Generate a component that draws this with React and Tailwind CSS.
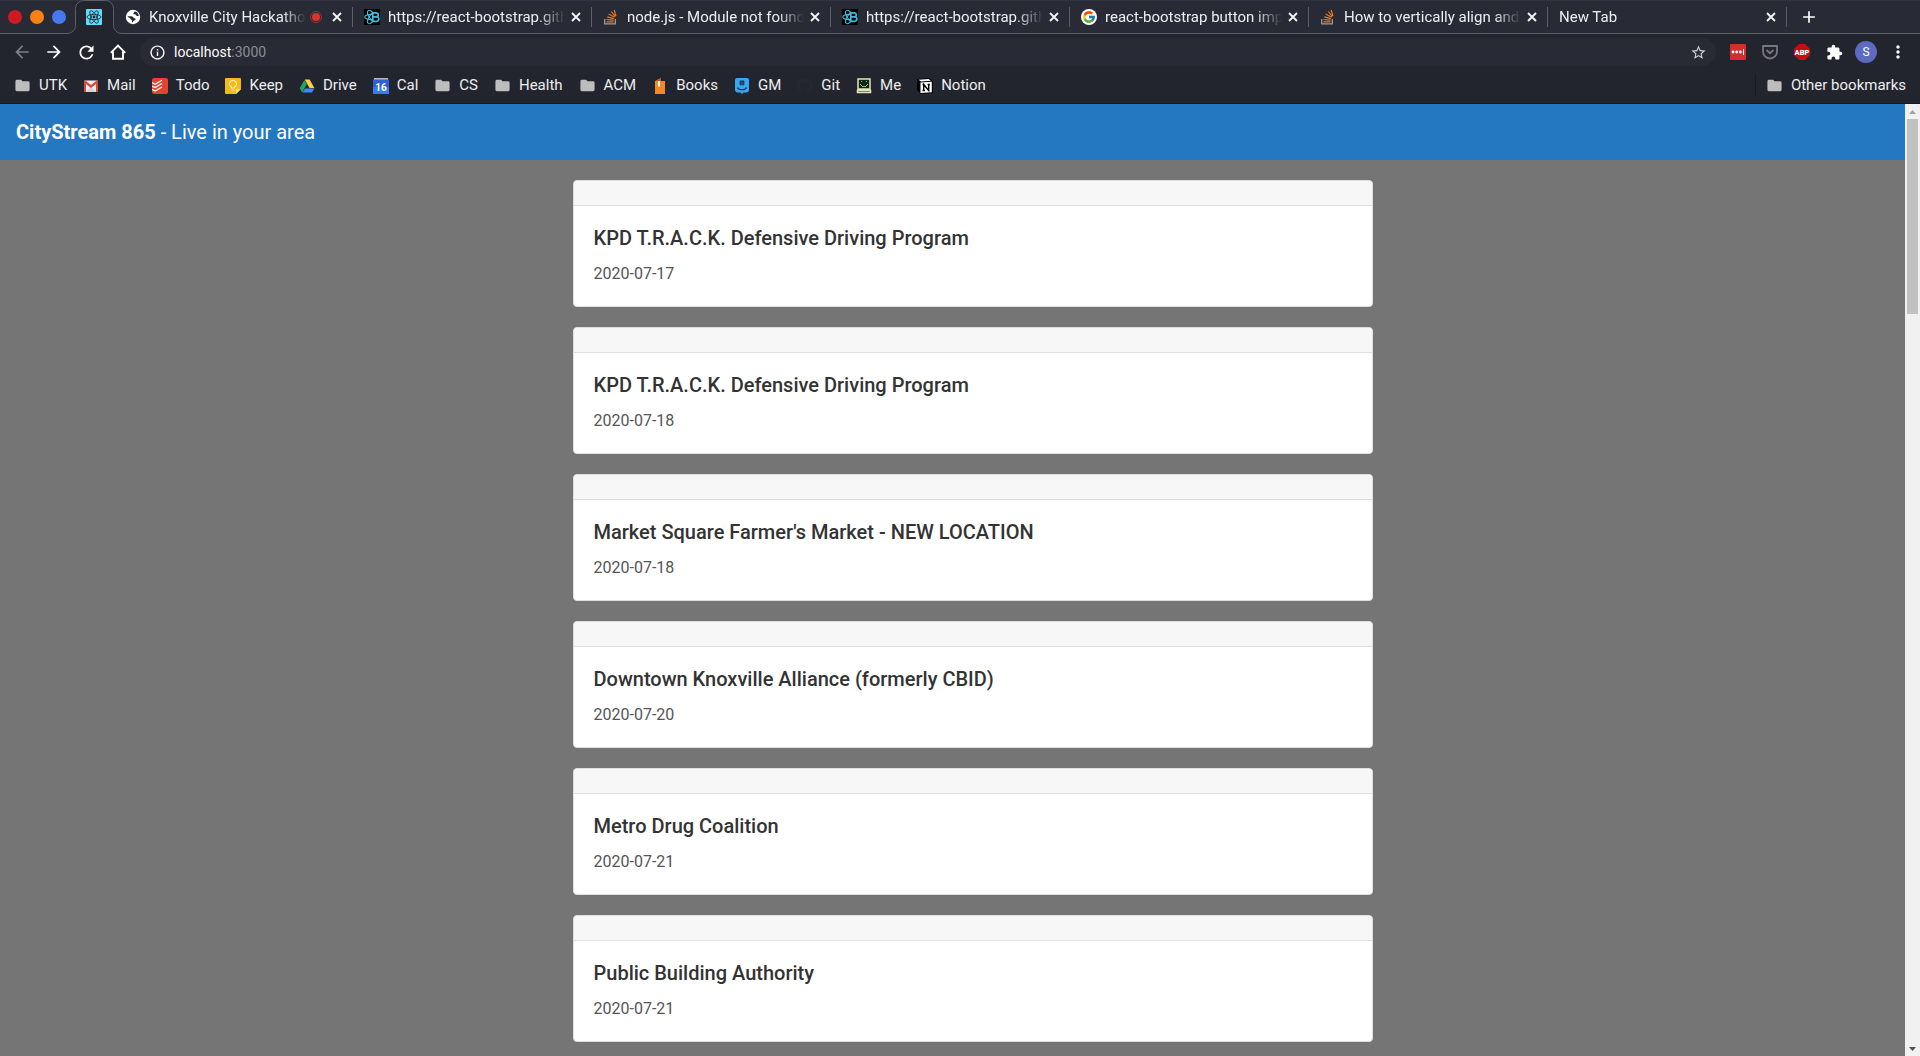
import React from "react";
import { FcGoogle } from "react-icons/fc";
import { FaGithub } from "react-icons/fa";
import {
  MdAdd, MdArrowBack, MdArrowForward, MdExtension, MdFolder,
  MdInfoOutline, MdMoreVert, MdRefresh, MdStarBorder,
} from "react-icons/md";

function ReactIcon() {
  return (
    <svg viewBox="0 0 16 16" className="size-4">
      <rect width="16" height="16" rx="1" fill="#61dafb" />
      <g fill="none" stroke="#20232a" strokeWidth="0.8">
        <ellipse cx="8" cy="8" rx="7" ry="2.7" />
        <ellipse cx="8" cy="8" rx="7" ry="2.7" transform="rotate(60 8 8)" />
        <ellipse cx="8" cy="8" rx="7" ry="2.7" transform="rotate(120 8 8)" />
      </g>
      <circle cx="8" cy="8" r="1.400" fill="#20232a" />
    </svg>
  );
}

function ReactBootstrapIcon() {
  return (
    <svg viewBox="0 0 16 16" className="size-4">
      <rect width="16" height="16" fill="#000" />
      <g fill="none" stroke="#41b9d6" strokeWidth="1.200">
        <path d="M8 5.300C3.500 5.200.8 6.500.8 8s2.700 2.800 7.200 2.700" />
        <path d="M8.500 3.400C7.200 1.400 5.200.8 4.200 1.600 2.900 2.800 4 6.300 5.600 8.800c1 1.600 1.900 2.900 2.900 3.800" />
        <path d="M8.500 12.600c-1.300 2-3.300 2.600-4.300 1.800C2.900 13.200 4 9.700 5.600 7.200c1-1.600 1.900-2.900 2.900-3.800" />
      </g>
      <path d="M8.800 3.800h3.400a2 2 0 0 1 0 4.100H8.800zm0 4.100h3.800a2.200 2.200 0 0 1 0 4.400H8.800z" fill="#000" stroke="#41b9d6" strokeWidth="1.700" />
    </svg>
  );
}

function StackOverflowIcon() {
  return (
    <svg viewBox="0 0 16 16" className="size-4">
      <path d="M1.700 10v4.900h10.600V10" fill="none" stroke="#9a9c9e" strokeWidth="1.300" />
      <g stroke="#e87722" strokeWidth="1.200">
        <path d="M3.500 12.900h7M3.600 10.500l6.900.7M4.200 7.800l6.600 1.900M5.700 5l5.800 3.300M8.300 2.500l4.100 5.200M11.200 1l1.700 6" />
      </g>
    </svg>
  );
}

function GlobeIcon() {
  return (
    <svg viewBox="0 0 16 16" className="size-4">
      <circle cx="8" cy="8" r="7.200" fill="#fff" />
      <path d="M9.300 2.700c.2.900-.9 1-.9 1.800 0 .7.900.9 1.600.8.900 0 .9 1.500 2 1.600.7.100 1.300-.1 1.700.3.200-1.700-.6-3.200-1.900-4-.8-.5-1.700-.7-2.500-.5z" fill="#282a35" />
      <path d="M2.400 7.400c1.400-.3 3.700-.3 5 .2 1.100.4.900 1.600 2.100 1.700 1.100.1 1.300.8.900 1.500-.6 1-1.900.7-2.300 1.700-.2.500-.5.900-1 1-.4-.8.300-1.500-.1-2.200-.3-.6-1.200-.6-1.500-1.300-.2-.7-.6-1.100-1.300-1.300-.6-.1-1.200-.6-1.800-1.300z" fill="#282a35" />
    </svg>
  );
}

function RecordingIcon() {
  return (
    <svg viewBox="0 0 12 12" className="size-3 shrink-0">
      <circle cx="6" cy="6" r="5.500" fill="none" stroke="#c5302d" strokeWidth="0.800" />
      <circle cx="6" cy="6" r="4" fill="#dc322e" />
    </svg>
  );
}

function CloseIcon() {
  return (
    <svg viewBox="0 0 14 14" className="size-[14px]" fill="none" stroke="#f4f4f5" strokeWidth="1.900">
      <path d="M3 3l8 8M11 3l-8 8" />
    </svg>
  );
}

function GmailIcon() {
  return (
    <svg viewBox="0 0 16 16" className="size-4">
      <rect x="1" y="2.500" width="14" height="11.500" rx="1" fill="#eceaea" />
      <path d="M3 14l5-5 5 5z" fill="#d5d3d3" />
      <path d="M1 14V3.500a1 1 0 0 1 1.500-.8L8 7l5.500-4.300a1 1 0 0 1 1.500.8V14h-2V6L8 10 3 6v8z" fill="#d54b3d" />
    </svg>
  );
}

function TodoistIcon() {
  return (
    <svg viewBox="0 0 16 16" className="size-4">
      <rect width="16" height="16" rx="2" fill="#e44332" />
      <path d="M0 4.600l3 1.600 7-4M0 8l3 1.600 7-4M0 11.400L3 13l7-4" fill="none" stroke="#fff" strokeWidth="1.200" />
    </svg>
  );
}

function KeepIcon() {
  return (
    <svg viewBox="0 0 16 16" className="size-4">
      <path d="M0 1a1 1 0 0 1 1-1h14a1 1 0 0 1 1 1v10l-5 5H1a1 1 0 0 1-1-1z" fill="#f5ba15" />
      <path d="M11 16v-4a1 1 0 0 1 1-1h4z" fill="#fbdf7f" />
      <path d="M6.500 10V9a3.500 3.500 0 1 1 3 0v1zM6.500 12.300h3" fill="none" stroke="#fdeebc" strokeWidth="1.100" />
    </svg>
  );
}

function DriveIcon() {
  return (
    <svg viewBox="0 0 16 16" className="size-4">
      <path d="M5.700 1.500h4.900L15.400 10h-4.900z" fill="#ffcf48" />
      <path d="M5.300 2.100L.7 10.200l2.400 4.200 4.700-8.200z" fill="#20a464" />
      <path d="M5.900 10.400h9.400L13 14.500H3.500z" fill="#4285f4" />
    </svg>
  );
}

function CalendarIcon() {
  return (
    <svg viewBox="0 0 16 16" className="size-4">
      <path d="M1 0h14v2H1z" fill="#b9bbc0" />
      <rect y="1.500" width="16" height="14.500" fill="#3060d4" />
      <rect y="9" width="16" height="7" fill="#4285f4" opacity=".7" />
      <text x="8" y="13" textAnchor="middle" fill="#fff" fontSize="10" fontWeight="700" fontFamily="Roboto, sans-serif">16</text>
    </svg>
  );
}

function FolderIcon() {
  return <MdFolder className="size-[17px] text-[#bdbdbd]" />;
}

function BooksIcon() {
  return (
    <svg viewBox="0 0 16 16" className="size-4">
      <path d="M3 3l6-3v3h4v13H3z" fill="#f08a24" />
      <path d="M4 2.500L9 .3V3H4z" fill="#c4521f" />
      <path d="M6 3h2v6l-1-1-1 1z" fill="#fff" />
    </svg>
  );
}

function GroupMeIcon() {
  return (
    <svg viewBox="0 0 16 16" className="size-4">
      <path d="M3 0h10a2 2 0 0 1 2 2v9.500a3 3 0 0 1-3 3H9.500L8 16l-1.500-1.500H4a3 3 0 0 1-3-3V2a2 2 0 0 1 2-2z" fill="#38a6f0" />
      <path d="M6.900 2.300v5.200M9.100 2.300v5.200M5.400 3.800h5.200M5.400 6h5.200M3.500 9.500c1.500 3 7.500 3 9 0" fill="none" stroke="#17324b" strokeWidth="1.200" />
    </svg>
  );
}

function GitHubIcon() {
  return <FaGithub className="size-4 text-[#24292e]" />;
}

function ComputerIcon() {
  return (
    <svg viewBox="0 0 16 16" className="size-4">
      <path d="M2 1h12v10H2zM1.500 12.500h13v2h-13z" fill="#17231a" stroke="#e4e5bd" strokeWidth="1.500" />
      <path d="M5 3h1v1H5zM10 3h1v1h-1zM4 6h1v1H4zM5 7h1v1H5zM6 8h4v1H6zM10 7h1v1h-1zM11 6h1v1h-1z" fill="#5ff04f" />
    </svg>
  );
}

function NotionIcon() {
  return (
    <svg viewBox="0 0 16 16" className="size-4">
      <path d="M0 1l12-1 4 3v12l-12 1-4-4z" fill="#000" />
      <path d="M1.500 1.700L11.500 1 14 2.700 4 3.400z" fill="#fff" />
      <path d="M3.500 4.400L14.800 3.700v10.600L3.500 15z" fill="#fff" />
      <path d="M6.700 12.500v-6l5 6v-6M5.500 6.500h2M5.500 12.500h2.400M10.500 6.500h2.400" fill="none" stroke="#000" strokeWidth="1.400" />
    </svg>
  );
}

function HomeIcon() {
  return (
    <svg viewBox="0 0 16 16" className="size-4" fill="none" stroke="#fff" strokeWidth="1.900">
      <path d="M.8 8.800L8 1.500l7.200 7.300M3 7.500v7.200h10V7.500" />
    </svg>
  );
}

const tabs = [
  { title: "Knoxville City Hackatho", icon: <GlobeIcon />, recording: true },
  { title: "https://react-bootstrap.gith", icon: <ReactBootstrapIcon /> },
  { title: "node.js - Module not found", icon: <StackOverflowIcon /> },
  { title: "https://react-bootstrap.gith", icon: <ReactBootstrapIcon /> },
  {
    title: "react-bootstrap button imp",
    icon: <span className="flex size-4 items-center justify-center rounded-full bg-white"><FcGoogle className="size-[14px]" /></span>,
  },
  { title: "How to vertically align and", icon: <StackOverflowIcon /> },
  { title: "New Tab" },
];

const bookmarks = [
  ["UTK", FolderIcon], ["Mail", GmailIcon], ["Todo", TodoistIcon], ["Keep", KeepIcon],
  ["Drive", DriveIcon], ["Cal", CalendarIcon], ["CS", FolderIcon], ["Health", FolderIcon],
  ["ACM", FolderIcon], ["Books", BooksIcon], ["GM", GroupMeIcon], ["Git", GitHubIcon],
  ["Me", ComputerIcon], ["Notion", NotionIcon],
];

const events = [
  ["KPD T.R.A.C.K. Defensive Driving Program", "2020-07-17"],
  ["KPD T.R.A.C.K. Defensive Driving Program", "2020-07-18"],
  ["Market Square Farmer's Market - NEW LOCATION", "2020-07-18"],
  ["Downtown Knoxville Alliance (formerly CBID)", "2020-07-20"],
  ["Metro Drug Coalition", "2020-07-21"],
  ["Public Building Authority", "2020-07-21"],
];

function Tab({ title, icon, recording }) {
  return (
    <div className="flex h-[33px] min-w-0 max-w-[239px] flex-1 items-center pl-[11px]">
      <button className="flex min-w-0 flex-1 items-center gap-2 text-left">
        {icon && <span className="flex size-4 shrink-0 items-center justify-center">{icon}</span>}
        <span className="min-w-0 flex-1 overflow-hidden whitespace-nowrap mask-r-from-85%">{title}</span>
      </button>
      {recording && <span className="mx-1"><RecordingIcon /></span>}
      <button aria-label={"Close " + title} className="mr-2 ml-1 shrink-0">
        <CloseIcon />
      </button>
      <span className="h-5 w-px shrink-0 bg-[#5c5e66]" />
    </div>
  );
}

function TabStrip() {
  return (
    <div className="flex h-[34px] items-stretch border-t border-b border-t-[#30323d] border-b-[#5c5e66] bg-[#282a35]">
      <div className="flex w-[76px] shrink-0 items-center gap-2 pl-2">
        <button aria-label="Close window" className="size-[14px] rounded-full bg-[#cc1b22]" />
        <button aria-label="Minimize window" className="size-[14px] rounded-full bg-[#fa8116]" />
        <button aria-label="Maximize window" className="size-[14px] rounded-full bg-[#4679f0]" />
      </div>
      <button aria-label="React App" className="relative flex w-9 shrink-0 items-center justify-center">
        <svg viewBox="0 0 55 34" className="absolute -top-px -left-[9px] h-[34px] w-[55px] max-w-none" fill="#23252e">
          <path d="M0 34v-.5a8 8 0 0 0 8.500-8V8.500a8 8 0 0 1 8-8h22a8 8 0 0 1 8 8v17a8 8 0 0 0 8.500 8v.5z" />
          <path d="M0 33.500a8 8 0 0 0 8.500-8V8.500a8 8 0 0 1 8-8h22a8 8 0 0 1 8 8v17a8 8 0 0 0 8.500 8" fill="none" stroke="#5c5e66" />
        </svg>
        <span className="relative"><ReactIcon /></span>
      </button>
      <div className="flex min-w-0 flex-1 items-center pl-[2px]">
        {tabs.map((tab, i) => <Tab key={i} {...tab} />)}
        <button aria-label="New tab" className="mx-3 shrink-0">
          <MdAdd className="size-5 text-white" />
        </button>
      </div>
    </div>
  );
}

function ToolButton({ label, children }) {
  return (
    <button aria-label={label} className="flex h-7 w-8 shrink-0 items-center justify-center">
      {children}
    </button>
  );
}

function Toolbar() {
  return (
    <div className="flex h-9 items-center bg-[#23252e] px-[6px] text-white">
      <ToolButton label="Back"><MdArrowBack className="size-5 text-[#7e8086]" /></ToolButton>
      <ToolButton label="Forward"><MdArrowForward className="size-5" /></ToolButton>
      <ToolButton label="Reload"><MdRefresh className="size-[21px]" /></ToolButton>
      <ToolButton label="Home"><HomeIcon /></ToolButton>
      <div className="mx-[6px] flex h-7 flex-1 items-center gap-2 rounded-full bg-[#282a35] px-[9px]">
        <MdInfoOutline className="size-[17px]" />
        <button className="flex-1 text-left text-sm">localhost<span className="text-[#8b8d92]">:3000</span></button>
        <button aria-label="Bookmark this page"><MdStarBorder className="size-[17px] text-[#d0d0d2]" /></button>
      </div>
      <ToolButton label="LastPass">
        <svg viewBox="0 0 16 16" className="size-4">
          <rect width="16" height="16" rx="1" fill="#d32d2f" />
          <g fill="#fff"><circle cx="3" cy="8" r="1.400" /><circle cx="6.700" cy="8" r="1.400" /><circle cx="10.400" cy="8" r="1.400" /><rect x="13" y="5" width="1" height="6" /></g>
        </svg>
      </ToolButton>
      <ToolButton label="Pocket">
        <svg viewBox="0 0 16 16" className="size-4" fill="none" stroke="#76787c">
          <path d="M1 2h14v5.500a7 7 0 0 1-14 0z" strokeWidth="1.800" strokeLinejoin="round" />
          <path d="M4.500 6L8 9.300 11.500 6" strokeWidth="1.900" />
        </svg>
      </ToolButton>
      <ToolButton label="Adblock Plus">
        <svg viewBox="0 0 16 16" className="size-4">
          <path d="M5 0h6l5 5v6l-5 5H5l-5-5V5z" fill="#c70d10" />
          <text x="8" y="10.700" textAnchor="middle" fill="#fff" fontSize="7.500" fontWeight="900" fontFamily="Roboto, sans-serif">ABP</text>
        </svg>
      </ToolButton>
      <ToolButton label="Extensions"><MdExtension className="size-[17px]" /></ToolButton>
      <ToolButton label="Profile">
        <span className="flex size-[22px] items-center justify-center rounded-full bg-[#5c6bc0] text-xs">S</span>
      </ToolButton>
      <ToolButton label="Menu"><MdMoreVert className="size-5" /></ToolButton>
    </div>
  );
}

function BookmarksBar() {
  return (
    <nav aria-label="Bookmarks" className="flex h-[34px] items-center gap-4 border-b border-[#1a1b22] bg-[#23252e] pr-[14px] pb-[2px] pl-[14px]">
      {bookmarks.map(([name, Icon]) => (
        <a key={name} href="#" className="flex items-center gap-2"><Icon />{name}</a>
      ))}
      <span className="flex-1" />
      <a href="#" className="flex items-center gap-2 border-l border-[#1a1b22] pl-[10px]"><FolderIcon />Other bookmarks</a>
    </nav>
  );
}

function EventCard({ title, date }) {
  return (
    <li className="mx-auto w-full max-w-[800px] rounded border border-[#dfdfdf] bg-white">
      <div className="h-[25px] rounded-t border-b border-[#dfdfdf] bg-[#f7f7f7]" />
      <div className="p-5">
        <h2 className="mb-3 text-xl leading-6 font-medium text-[#333]">{title}</h2>
        <p className="text-base leading-6 text-[#555]">{date}</p>
      </div>
    </li>
  );
}

function Scrollbar() {
  return (
    <div className="flex w-[15px] shrink-0 flex-col items-center bg-[#f1f1f1]">
      <svg viewBox="0 0 15 15" className="size-[15px] shrink-0"><path d="M4 10h7L7.500 6z" fill="#a3a3a3" /></svg>
      <div className="h-[195px] w-[11px] bg-[#c1c1c1]" />
      <span className="flex-1" />
      <svg viewBox="0 0 15 15" className="size-[15px] shrink-0"><path d="M4 6h7l-3.500 4z" fill="#505050" /></svg>
    </div>
  );
}

export default function App() {
  return (
    <div className="flex h-screen flex-col overflow-hidden bg-[#757575] font-[Roboto,sans-serif]">
      <header className="shrink-0 text-[15px] text-[#eeeeef]">
        <TabStrip />
        <Toolbar />
        <BookmarksBar />
      </header>
      <div className="flex min-h-0 flex-1">
        <main className="min-w-0 flex-1 overflow-hidden">
          <h1 className="flex h-14 items-center bg-[#2478c2] px-4 text-xl font-normal text-white">
            <span><b className="font-bold">CityStream 865</b> - Live in your area</span>
          </h1>
          <ul className="flex flex-col gap-5 pt-5 pl-10">
            {events.map(([title, date]) => <EventCard key={title + date} title={title} date={date} />)}
          </ul>
        </main>
        <Scrollbar />
      </div>
    </div>
  );
}
